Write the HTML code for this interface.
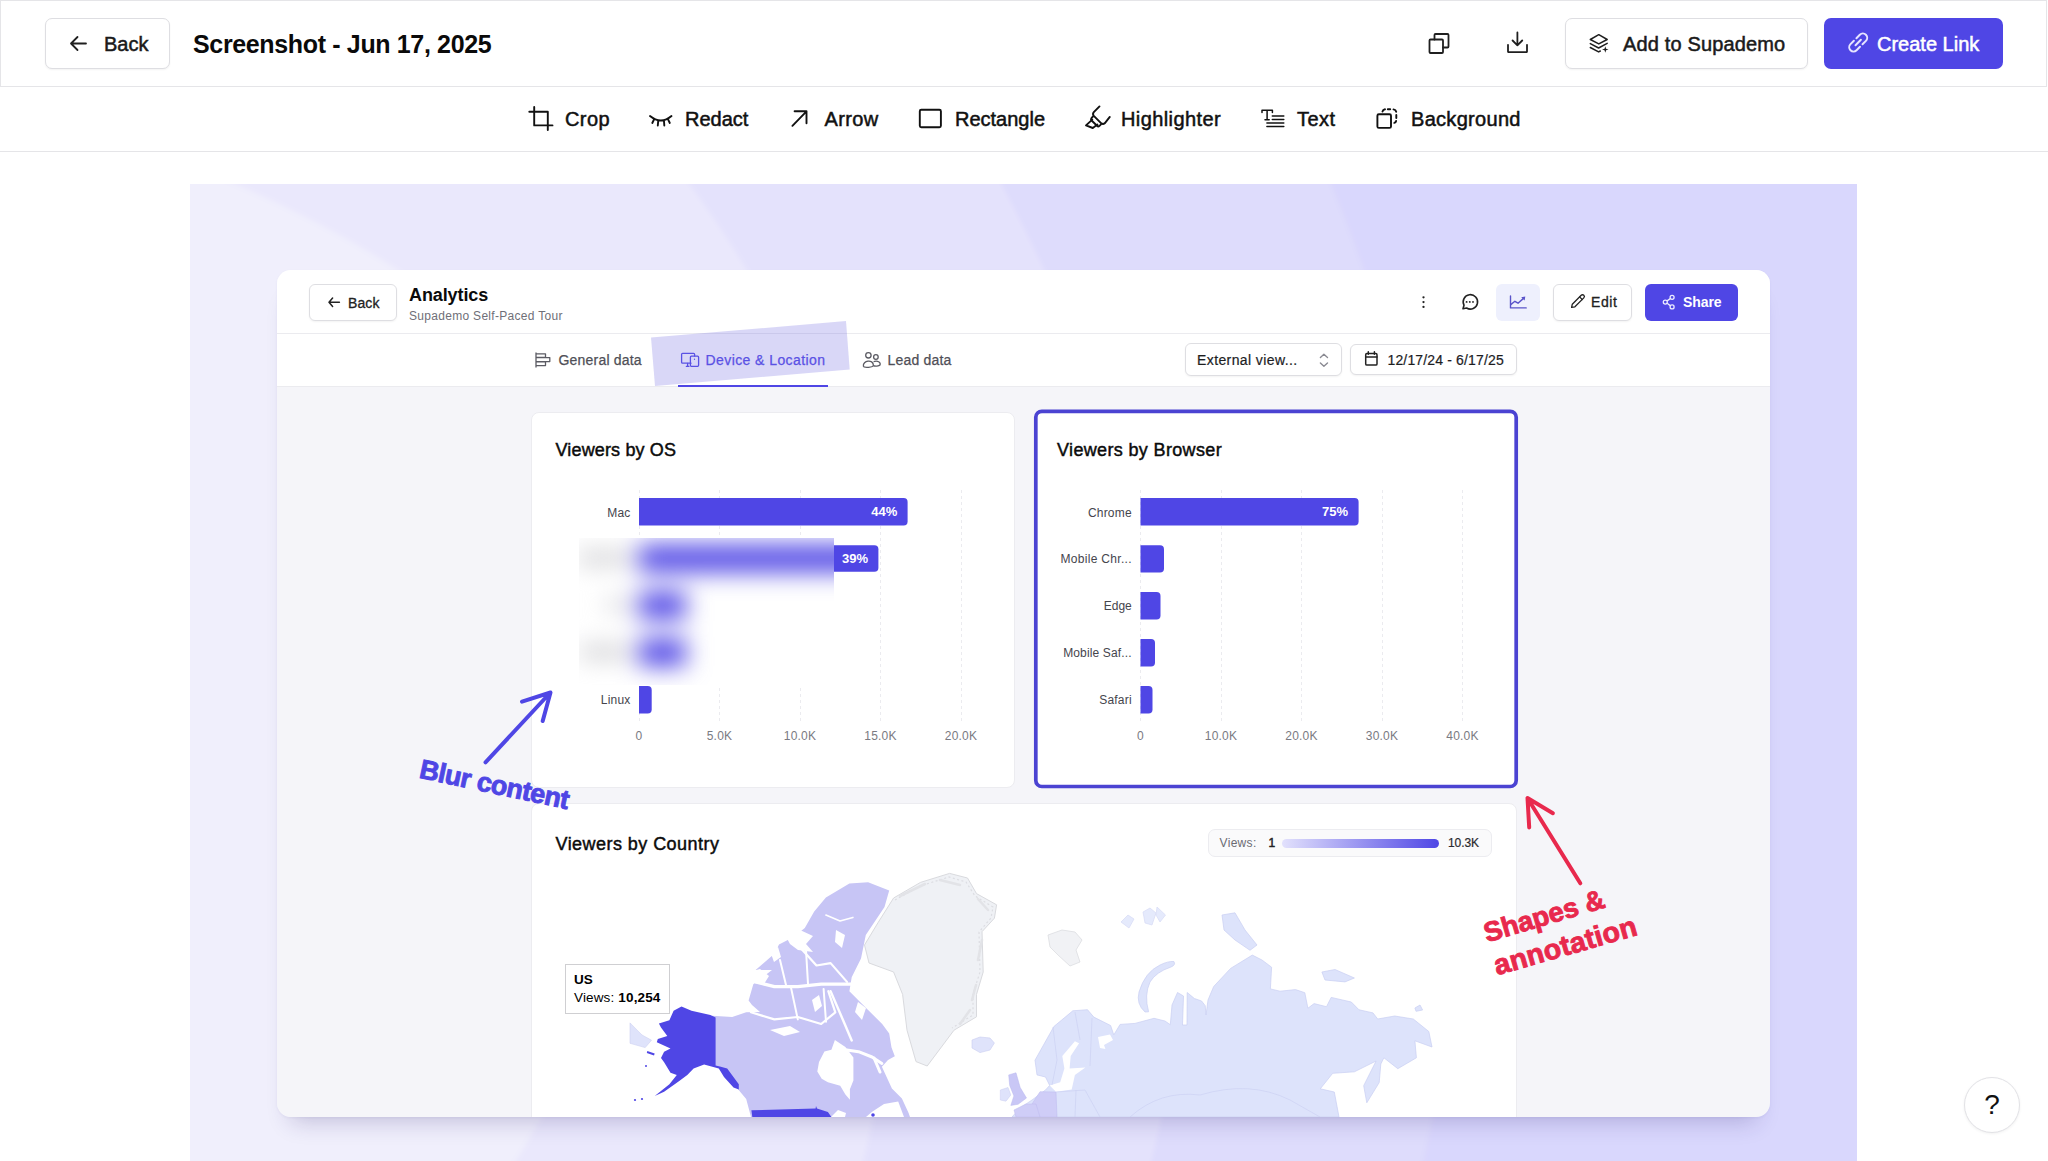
<!DOCTYPE html>
<html><head><meta charset="utf-8">
<style>
*{box-sizing:border-box;margin:0;padding:0}
html,body{width:2048px;height:1161px;overflow:hidden;background:#fff}
body{position:relative;font-family:"Liberation Sans",sans-serif;color:#111}
.a{position:absolute}
.t{position:absolute;white-space:nowrap;line-height:1}
svg{position:absolute;overflow:visible}
.btn{position:absolute;border:1px solid #dedee2;border-radius:7px;background:#fff;box-shadow:0 1px 2px rgba(0,0,0,.05)}
.med{-webkit-text-stroke:.5px currentColor}
</style></head>
<body>
<!-- header -->
<div class="a" style="left:0;top:0;width:2047px;height:87px;border:1px solid #e5e5e8"></div>
<div class="a" style="left:0;top:151px;width:2048px;height:1px;background:#e5e5e8"></div>

<div class="btn" style="left:45px;top:18px;width:125px;height:51px"></div>
<div class="btn" style="left:1565px;top:18px;width:243px;height:51px"></div>
<div class="a" style="left:1824px;top:18px;width:179px;height:51px;border-radius:7px;background:#4f46e5"></div>
<svg style="left:0;top:0" width="2048" height="160">
  <g fill="none" stroke="#1f1f1f" stroke-width="1.8" stroke-linecap="round" stroke-linejoin="round">
    <path d="M86 43.5H71M77.5 37L71 43.5L77.5 50"/>
    <!-- copy -->
    <rect x="1429.5" y="39.5" width="13.5" height="13.5" rx="1"/>
    <path d="M1434.5 39.5V35a1 1 0 0 1 1-1H1447.5a1 1 0 0 1 1 1V46.5a1 1 0 0 1-1 1H1443"/>
    <!-- download -->
    <path d="M1517.4 32.5V45.3M1512.6 40.5L1517.4 45.3L1522.2 40.5M1508 44.8V51.5a.7.7 0 0 0 .7.7H1526.3a.7.7 0 0 0 .7-.7V44.8"/>
    <!-- layers sparkle -->
    <path d="M1598.8 34.7L1607.2 39.5L1598.8 43.9L1590.3 39.5Z" stroke-width="1.5"/>
    <path d="M1590.3 43.6L1598.6 48L1607.2 43.4M1590.3 47.5L1598.6 51.9L1600.3 51" stroke-width="1.5"/>
  </g>
  <path d="M1605.3 46.2L1606.1 48.7L1608.6 49.5L1606.1 50.3L1605.3 52.8L1604.5 50.3L1602 49.5L1604.5 48.7Z" fill="#1f1f1f"/>
  <!-- toolbar icons -->
  <g fill="none" stroke="#111" stroke-width="1.9" stroke-linecap="round" stroke-linejoin="round">
    <path d="M534.2 107V125.4H552.5M529.3 111.7H547.8V130"/>
    <path d="M650 116Q661 125 671.5 116M652.3 123L654.3 118.8M657.8 125.5L658.2 121.2M664.3 125.5L664 121.2M669.8 123L667.8 118.8"/>
    <path d="M792.4 125.8L806.5 111.3M794.6 111.3H806.5V123.3"/>
    <rect x="919.8" y="109.8" width="21.1" height="17.5" rx="1.5"/>
    <path d="M1099.5 106.4L1093.8 112.2Q1092.2 114 1093.8 115.8L1101.3 123.3Q1103 124.9 1104.7 123.3L1109.8 116.9"/>
    <path d="M1093 116.5L1091.6 117.9Q1090.4 119.2 1091.6 120.5L1097 125.8Q1098.2 127 1099.5 125.8L1101 124.3"/>
    <path d="M1092.3 119.6L1086 125.4L1092.8 128L1097.4 124.6"/>
    <path d="M1262 112.6V110.3H1272.4V112.6M1267.1 110.3V119.7M1265 119.7H1269.2" stroke-width="1.5"/>
    <path d="M1272.3 116H1283.8M1272.3 119.5H1283.8M1266.9 122.9H1283.8M1266.9 126.4H1283.8" stroke-width="1.5"/>
    <rect x="1377.4" y="114.3" width="13.6" height="13.6" rx="1.5"/>
    <path d="M1382.5 111.5Q1383 109.6 1385 109.3M1387.8 109.3H1390.2M1393.5 109.4Q1395.8 109.8 1396.2 111.8M1396.3 115V118M1396.1 121Q1395.8 122.5 1394.3 122.9"/>
  </g>
</svg>
<div class="t med" style="left:104px;top:34px;font-size:20px;color:#1a1a1a">Back</div>
<div class="t" style="left:193px;top:32px;font-size:25px;font-weight:bold;letter-spacing:-0.35px;color:#0a0a0a">Screenshot - Jun 17, 2025</div>

<div class="t med" style="left:1623px;top:34px;font-size:20px;color:#1a1a1a;letter-spacing:.15px">Add to Supademo</div>
<svg style="left:0;top:0" width="2048" height="90">
  <g transform="translate(1858.2 42.5) rotate(-45)" fill="none" stroke="#e6e4ff" stroke-width="2" stroke-linecap="round">
    <path d="M-3.8 0H3.8"/>
    <path d="M-1.8 -4.3H-6.6A4.3 4.3 0 0 0 -6.6 4.3H-1.8"/>
    <path d="M1.8 -4.3H6.6A4.3 4.3 0 0 1 6.6 4.3H1.8"/>
  </g>
</svg>
<div class="t med" style="left:1877px;top:34px;font-size:20px;color:#fff">Create Link</div>

<!-- toolbar -->
<div class="t med" style="left:565px;top:108.5px;font-size:20px;letter-spacing:.4px">Crop</div>
<div class="t med" style="left:685px;top:108.5px;font-size:20px">Redact</div>
<div class="t med" style="left:824.5px;top:108.5px;font-size:20px;letter-spacing:.35px">Arrow</div>
<div class="t med" style="left:955px;top:108.5px;font-size:20px">Rectangle</div>
<div class="t med" style="left:1121px;top:108.5px;font-size:20px;letter-spacing:.4px">Highlighter</div>
<div class="t med" style="left:1297px;top:108.5px;font-size:20px;letter-spacing:.45px">Text</div>
<div class="t med" style="left:1411px;top:108.5px;font-size:20px;letter-spacing:.3px">Background</div>


<!-- canvas -->
<svg style="left:0;top:0" width="2048" height="1161">
  <defs>
    <clipPath id="cv"><rect x="190" y="184" width="1667" height="977"/></clipPath>
    <filter id="bb" x="-5%" y="-5%" width="110%" height="110%"><feGaussianBlur stdDeviation="2.5"/></filter>
  </defs>
  <g clip-path="url(#cv)">
   <g filter="url(#bb)">
    <rect x="160" y="150" width="1730" height="1040" fill="#d9d7fd"/>
    <path d="M160 150H1317Q1541 672 1419 1180H160Z" fill="#dedcfc"/>
    <path d="M160 150H983Q1278 679 1147 1180H160Z" fill="#e4e2fc"/>
    <path d="M160 150H663Q1004 579 859 1180H160Z" fill="#eae8fc"/>
    <path d="M160 150H150Q960 450 504 1180H160Z" fill="#f0effc"/>
   </g>
  </g>
</svg>
<div class="a" style="left:277px;top:270px;width:1493px;height:847px;border-radius:14px;box-shadow:0 18px 22px -14px rgba(40,30,110,.24),0 1px 3px rgba(40,30,110,.05)"></div>
<div class="a" style="left:277px;top:270px;width:1493px;height:847px;border-radius:14px;overflow:hidden;background:#f5f5f9">
<div class="a" style="left:-277px;top:-270px;width:2048px;height:1161px">
  <!-- app header -->
  <div class="a" style="left:277px;top:270px;width:1493px;height:64px;background:#fff;border-bottom:1px solid #ebebef"></div>
  <div class="a" style="left:277px;top:334px;width:1493px;height:53px;background:#fff;border-bottom:1px solid #ebebef"></div>
  <div class="btn" style="left:309px;top:284px;width:88px;height:37px;border-radius:6px"></div>
  <div class="btn" style="left:1553px;top:284px;width:79px;height:37px;border-radius:6px"></div>
  <div class="a" style="left:1645px;top:284px;width:93px;height:37px;border-radius:6px;background:#4f46e5"></div>
  <div class="a" style="left:1496px;top:284px;width:44px;height:37px;border-radius:6px;background:#eef0fd"></div>
  <div class="btn" style="left:1185px;top:343px;width:157px;height:33px;border-radius:6px"></div>
  <div class="btn" style="left:1350px;top:344px;width:167px;height:31px;border-radius:6px"></div>
  <div class="t med" style="left:348px;top:296px;font-size:14px;color:#222;letter-spacing:.1px;-webkit-text-stroke:.3px #222">Back</div>
  <div class="t" style="left:409px;top:285.5px;font-size:18px;font-weight:bold;color:#0b0b0b;letter-spacing:-.1px">Analytics</div>
  <div class="t" style="left:409px;top:309.5px;font-size:12px;color:#6f6f78;letter-spacing:.3px">Supademo Self-Paced Tour</div>
  <div class="t" style="left:1591px;top:295px;font-size:14px;color:#222;letter-spacing:.6px;-webkit-text-stroke:.3px #222">Edit</div>
  <div class="t" style="left:1683px;top:295px;font-size:14px;font-weight:bold;color:#fff;letter-spacing:-.1px">Share</div>
  <div class="t" style="left:558.5px;top:352.5px;font-size:14px;color:#4f4f57;letter-spacing:.2px;-webkit-text-stroke:.25px #4f4f57">General data</div>
  <div class="t" style="left:887.5px;top:352.5px;font-size:14px;color:#4f4f57;letter-spacing:.2px;-webkit-text-stroke:.25px #4f4f57">Lead data</div>
  <div class="t" style="left:1197px;top:353px;font-size:14px;color:#1d1d1f;letter-spacing:.4px;-webkit-text-stroke:.2px #1d1d1f">External view...</div>
  <div class="t" style="left:1387.5px;top:352.5px;font-size:14px;color:#1d1d1f;letter-spacing:.15px;-webkit-text-stroke:.2px #1d1d1f">12/17/24 - 6/17/25</div>
  <div class="a" style="left:678px;top:385px;width:150px;height:2px;background:#4f46e5"></div>

  <!-- cards -->
  <div class="a" style="left:531px;top:412px;width:484px;height:376px;background:#fff;border:1px solid #ececf0;border-radius:8px"></div>
  <div class="a" style="left:1035px;top:412px;width:482px;height:376px;background:#fff;border:1px solid #ececf0;border-radius:8px"></div>
  <div class="a" style="left:531px;top:803px;width:986px;height:400px;background:#fff;border:1px solid #ececf0;border-radius:8px"></div>

  <svg style="left:0;top:0" width="2048" height="1161">
    <g fill="none" stroke="#222" stroke-width="1.5" stroke-linecap="round" stroke-linejoin="round">
      <path d="M339.4 302.2H329M332.6 298L329 302.2L332.6 306.4"/>
      <path d="M1463 308.8L1464 305.2A7.2 7.2 0 1 1 1466.6 308Z" stroke-width="1.6"/>
      <path d="M1571.6 307.4L1572.3 304.2L1581.2 295.3A1.8 1.8 0 0 1 1583.8 297.9L1574.9 306.8Z" stroke-width="1.3"/>
      <path d="M1579.6 296.9L1582.2 299.5" stroke-width="1.2"/>
      <rect x="1365.7" y="353.6" width="11.3" height="11.5" rx="1.2" stroke-width="1.5"/>
      <path d="M1365.7 357H1377M1368.3 351.8V354.2M1374.4 351.8V354.2" stroke-width="1.5"/>
    </g>
    <g fill="#222"><circle cx="1423.5" cy="297.3" r="1.15"/><circle cx="1423.5" cy="302.1" r="1.15"/><circle cx="1423.5" cy="306.9" r="1.15"/>
      <circle cx="1466.6" cy="301.9" r=".95"/><circle cx="1469.8" cy="301.9" r=".95"/><circle cx="1473" cy="301.9" r=".95"/></g>
    <g fill="none" stroke="#5a54c9" stroke-width="1.4" stroke-linecap="round" stroke-linejoin="round">
      <path d="M1510.5 296V307.9H1526.2"/>
      <path d="M1510.7 304.6L1514.9 301.3L1518 303.2L1523.5 298.4"/>
    </g>
    <path d="M1521.2 297.2L1525.3 296.4L1524.6 300.5Z" fill="#5a54c9"/>
    <g fill="none" stroke="#ecebff" stroke-width="1.3">
      <circle cx="1672.1" cy="297.3" r="2"/><circle cx="1665.3" cy="302.1" r="2"/><circle cx="1672.1" cy="306.9" r="2"/>
      <path d="M1667.1 300.9L1670.3 298.6M1667.1 303.3L1670.3 305.6"/>
    </g>
    <g fill="none" stroke="#8a8a92" stroke-width="1.4" stroke-linecap="round" stroke-linejoin="round">
      <path d="M1320.4 357.5L1323.9 354.3L1327.5 357.5M1320.4 363L1323.9 366.2L1327.5 363"/>
    </g>
    <g fill="none" stroke="#5b5b63" stroke-width="1.3" stroke-linejoin="round">
      <path d="M536 352.5V367.4"/>
      <path d="M536 353.8H545.5V357.4H536M536 357.6H549.8V361.6H536M536 361.8H545.5V365.6H536"/>
      <circle cx="868.4" cy="355.3" r="2.7"/><circle cx="875.9" cy="357" r="2.3"/>
      <path d="M863.4 366.2C862.5 360.5 873.2 358.8 873.4 365.2C873.2 367.6 863.8 368 863.4 366.2Z"/>
      <path d="M873.6 361.6C877.5 360.3 881 362.2 880 365C879 366.2 875 366.4 873.4 365.6"/>
    </g>
  </svg>
  <!-- device tab -->
  <div class="t" style="left:705.5px;top:352.5px;font-size:14px;color:#4f46e5;letter-spacing:.42px;-webkit-text-stroke:.25px #4f46e5">Device &amp; Location</div>
  <svg style="left:0;top:0" width="2048" height="1161">
    <g fill="none" stroke="#4f46e5" stroke-width="1.3" stroke-linejoin="round" stroke-linecap="round">
      <path d="M691 363.2H682.6A1 1 0 0 1 681.6 362.2V354.3A1 1 0 0 1 682.6 353.3H693.6A1 1 0 0 1 694.6 354.3V356"/>
      <path d="M686.3 366.3H689M687.6 363.4V366.3"/>
      <rect x="690.4" y="356.2" width="8.2" height="10.1" rx="1"/>
      <path d="M694.5 359.2V359.3"/>
    </g>
    <polygon points="651,337.6 846,321 849.7,369.5 655,386" fill="rgba(120,110,225,.28)"/>
  </svg>
  <div class="t" style="left:555.5px;top:441px;font-size:18px;color:#0b0b0b;letter-spacing:.15px;-webkit-text-stroke:.45px #0b0b0b">Viewers by OS</div>
  <div class="t" style="left:1057px;top:441px;font-size:18px;color:#0b0b0b;letter-spacing:.35px;-webkit-text-stroke:.45px #0b0b0b">Viewers by Browser</div>
  <div class="t" style="left:555.5px;top:835px;font-size:18px;color:#0b0b0b;letter-spacing:.45px;-webkit-text-stroke:.45px #0b0b0b">Viewers by Country</div>
  <!-- charts -->
  <svg style="left:0;top:0" width="2048" height="1161">
    <g stroke="#ebebef" stroke-width="1" stroke-dasharray="3 3">
      <path d="M639.5 490V723"/>
      <path d="M719.5 490V723"/>
      <path d="M800.5 490V723"/>
      <path d="M880.5 490V723"/>
      <path d="M961.5 490V723"/>
      <path d="M1140.5 490V723"/>
      <path d="M1221.5 490V723"/>
      <path d="M1301.5 490V723"/>
      <path d="M1382.5 490V723"/>
      <path d="M1462.5 490V723"/>
    </g>
    <g fill="#4f46e5">
      <path d="M639 498H903.6Q907.6 498 907.6 502V521.4Q907.6 525.4 903.6 525.4H639Z"/>
      <path d="M834 545.2H874.4Q878.4 545.2 878.4 549.2V567.8000000000001Q878.4 571.8000000000001 874.4 571.8000000000001H834Z"/>
      <path d="M639 686H647.7Q651.7 686 651.7 690V709.4Q651.7 713.4 647.7 713.4H639Z"/>
      <path d="M1140.5 498H1354.6Q1358.6 498 1358.6 502V521.4Q1358.6 525.4 1354.6 525.4H1140.5Z"/>
      <path d="M1140.5 545.2H1160Q1164 545.2 1164 549.2V568.6Q1164 572.6 1160 572.6H1140.5Z"/>
      <path d="M1140.5 592H1156.5Q1160.5 592 1160.5 596V615.4Q1160.5 619.4 1156.5 619.4H1140.5Z"/>
      <path d="M1140.5 639H1151Q1155 639 1155 643V662.4Q1155 666.4 1151 666.4H1140.5Z"/>
      <path d="M1140.5 686H1148.5Q1152.5 686 1152.5 690V709.4Q1152.5 713.4 1148.5 713.4H1140.5Z"/>
    </g>
  </svg>
  <div class="t" style="left:480.5px;width:150px;text-align:right;top:506.5px;font-size:12px;color:#45454d;letter-spacing:0.2px">Mac</div>
  <div class="t" style="left:480.5px;width:150px;text-align:right;top:694.3px;font-size:12px;color:#45454d;letter-spacing:0.2px">Linux</div>
  <div class="t" style="left:981.8px;width:150px;text-align:right;top:506.5px;font-size:12px;color:#45454d;letter-spacing:0.2px">Chrome</div>
  <div class="t" style="left:981.8px;width:150px;text-align:right;top:553.3px;font-size:12px;color:#45454d;letter-spacing:0.3px">Mobile Chr...</div>
  <div class="t" style="left:981.8px;width:150px;text-align:right;top:600.3px;font-size:12px;color:#45454d;letter-spacing:0px">Edge</div>
  <div class="t" style="left:981.8px;width:150px;text-align:right;top:647.3px;font-size:12px;color:#45454d;letter-spacing:0.15px">Mobile Saf...</div>
  <div class="t" style="left:981.8px;width:150px;text-align:right;top:694.3px;font-size:12px;color:#45454d;letter-spacing:0.2px">Safari</div>
  <div class="t" style="left:599px;width:80px;text-align:center;top:729.8px;font-size:12px;color:#7a7a82;letter-spacing:.2px">0</div>
  <div class="t" style="left:679.5px;width:80px;text-align:center;top:729.8px;font-size:12px;color:#7a7a82;letter-spacing:.2px">5.0K</div>
  <div class="t" style="left:760px;width:80px;text-align:center;top:729.8px;font-size:12px;color:#7a7a82;letter-spacing:.2px">10.0K</div>
  <div class="t" style="left:840.5px;width:80px;text-align:center;top:729.8px;font-size:12px;color:#7a7a82;letter-spacing:.2px">15.0K</div>
  <div class="t" style="left:921px;width:80px;text-align:center;top:729.8px;font-size:12px;color:#7a7a82;letter-spacing:.2px">20.0K</div>
  <div class="t" style="left:1100.5px;width:80px;text-align:center;top:729.8px;font-size:12px;color:#7a7a82;letter-spacing:.2px">0</div>
  <div class="t" style="left:1181px;width:80px;text-align:center;top:729.8px;font-size:12px;color:#7a7a82;letter-spacing:.2px">10.0K</div>
  <div class="t" style="left:1261.5px;width:80px;text-align:center;top:729.8px;font-size:12px;color:#7a7a82;letter-spacing:.2px">20.0K</div>
  <div class="t" style="left:1342px;width:80px;text-align:center;top:729.8px;font-size:12px;color:#7a7a82;letter-spacing:.2px">30.0K</div>
  <div class="t" style="left:1422.5px;width:80px;text-align:center;top:729.8px;font-size:12px;color:#7a7a82;letter-spacing:.2px">40.0K</div>
  <div class="t" style="left:747.3px;width:150px;text-align:right;top:505px;font-size:13px;font-weight:bold;color:#fff;letter-spacing:0px">44%</div>
  <div class="t" style="left:718px;width:150px;text-align:right;top:552px;font-size:13px;font-weight:bold;color:#fff;letter-spacing:0px">39%</div>
  <div class="t" style="left:1198px;width:150px;text-align:right;top:505px;font-size:13px;font-weight:bold;color:#fff;letter-spacing:0px">75%</div>
  <div class="a" style="left:579px;top:537.5px;width:255px;height:147px;overflow:hidden;background:#fff">
    <div class="a" style="left:-579px;top:-537.5px;width:1000px;height:800px;filter:blur(12px)">
      <div class="a" style="left:639px;top:545px;width:239px;height:27px;background:#4f46e5"></div>
      <div class="a" style="left:639px;top:592px;width:47px;height:27px;background:#4f46e5"></div>
      <div class="a" style="left:639px;top:639px;width:47px;height:27px;background:#4f46e5"></div>
      <div class="a" style="left:578px;top:552px;width:52px;height:12px;background:#c8c8cc"></div>
      <div class="a" style="left:606px;top:599px;width:24px;height:12px;background:#d4d4d8"></div>
      <div class="a" style="left:580px;top:646px;width:50px;height:12px;background:#c8c8cc"></div>
    </div>
  </div>
  <!-- map -->
  <svg style="left:0;top:0" width="2048" height="1161">
    <g fill="#c7c5f5">
      <path d="M748.6 1000.6L753.3 984.2L772 970.1L755.6 970.1L774.4 953.7L779 944.4L793.1 937.3L804.8 928L814.2 911.6L825.9 897.5L849.4 883.4L868.1 882.3L889.2 890.5L884.5 906.9L865.8 935L861 958.4L851.7 977.2L849.4 991.2L868.1 1010L882.2 1024L889.2 1033.4L891.5 1047.5L898.6 1066.2L896.2 1082.6L905.6 1094.4L910.3 1117L751 1117L746.2 1099L734.5 1085L718.1 1067.4L712 1065L712 1015.8L732.2 1017L746.2 1012.3L760 1012L752 1005Z"/>
    </g>
    <g fill="#fff">
      <path d="M817.3 1071.6L819 1062L824.4 1051.4L831.4 1049.7L834.9 1040L845.4 1047L853.4 1057.6L853.4 1080.4L849.9 1089.2L849.9 1099.8L845.4 1094.5L840.2 1085.7L827.9 1082.2L821.7 1078.7Z"/>
      <path d="M881.9 1066.8L891.9 1088.5L901.9 1098.5L908.6 1113L910 1117L915 1117L915 1045L888 1060Z"/>
      <path d="M871.8 1112L884 1104L898.2 1101.5L904 1117L866 1117Z"/>
      <path d="M831 1117L838 1110L846 1113L845 1117Z"/>
      <path d="M784 933L800 930L813 936L806 944L813 952L798 950L790 944Z"/>
      <path d="M749 972L760 969L769 976L764 984L752 983Z"/>
      <path d="M770 951L778 947L781 957L774 962Z"/>
      <path d="M812 1000L819 995L822 1006L815 1012Z"/>
      <path d="M836 930L845 935L842 948L835 942Z"/>
      <path d="M858 1002L866 1008L862 1020L855 1012Z"/>
      <path d="M770 1030L790 1026L800 1032L784 1036Z"/>
    </g>
    <g fill="none" stroke="#fff" stroke-linecap="round" stroke-linejoin="round">
      <path d="M751 1012.3L774.4 1019.4L797.8 1017L821.2 1024L835.3 1012.3L828.3 991.2" stroke-width="2.2"/>
      <path d="M755.6 981.9L774.4 986.6L797.8 986.6L821.2 984.2L851.7 984.2L862 992" stroke-width="3.2"/>
      <path d="M790.8 937.3L816.5 965.5L830.6 963.1L847 981.9" stroke-width="2.2"/>
      <path d="M825.9 915L840 921L852.9 917.4" stroke-width="1.6"/>
      <path d="M790.8 986.6L797.8 1019.4M823.6 988.9L826 1021.7M780 960L786 985M806 950L808 984" stroke-width="2"/>
      <path d="M830.6 991.2L844.7 1024L851.7 1040.5" stroke-width="2.4"/>
      <path d="M846.8 1050L858.5 1051.7L872 1057L881.9 1063.4" stroke-width="3"/>
      <path d="M874 1058L880 1072" stroke-width="3"/>
    </g>
    <!-- US -->
    <g fill="#4f46e5">
      <path d="M681.5 1006.6L691.5 1010.8L710.4 1015L715.6 1017.6L715.6 1065.4L719.9 1066.5L727.2 1068.6L738.8 1084.3L738.8 1089.6L733.5 1087.5L724 1077L718.8 1068.6L704.1 1064.4L693.6 1068.6L687.3 1074.9L678.9 1081.2L664.1 1091.7L654.7 1095.9L669.4 1084.3L676.8 1074.9L670.5 1072.8L664.1 1062.3L661 1058.1L664.1 1051.8L670.5 1048.6L656.8 1042.3L657.8 1039.1L667.3 1036L661 1027.6L658.9 1023.4L669.4 1020.2L673.6 1010.8Z"/>
      <path d="M751.4 1110.3L815.6 1108.5L816 1106L817 1108.6L827.9 1112L831.4 1117L752.3 1117Z"/>
      <circle cx="873" cy="1115" r="1.8"/>
      <path d="M647.3 1051L654.7 1053.5L654 1055.5L646.8 1053Z"/><circle cx="646" cy="1066" r="1"/><circle cx="635" cy="1100" r="1.1"/><circle cx="642" cy="1099" r="1.1"/>
    </g>
    <!-- Chukotka -->
    <path d="M630 1022.9L642 1035L651.5 1040.2L645.2 1047.6L630 1043.3Z" fill="#dfe3fb" stroke="#cdd0f2" stroke-width=".6"/>
    <!-- Greenland -->
    <path d="M920.5 882.4L949.6 873.4L967.5 878L976.5 893.6L996.6 904.8L994.4 918.2L982 931.7L983.2 972L976.5 994.4L976.5 1016.8L954 1030.2L927.2 1066L916 1061.6L907 1030.2L902.6 994.4L893.6 972L869 963L864.5 945L878 922.7L893.6 898Z" fill="#eff1f5" stroke="#d9dade" stroke-width="1"/>
    <path d="M1048 935L1062 930L1075 932L1082 940L1076 950L1080 962L1070 966L1058 955L1050 947Z" fill="#f1f2f5" stroke="#dcdde1" stroke-width=".8"/>
    <path d="M895 900L920 886L949 877L966 882L975 896L993 907L991 918L979 932L980 972L973 994L973 1015L952 1028" fill="none" stroke="#dcdde2" stroke-width="1.2" stroke-dasharray="2 2.5"/>
    <path d="M900 896L925 884M940 880L960 885M978 899L988 910M982 940L978 960M976 985L972 1000M970 1010L960 1024" fill="none" stroke="#e2e3e7" stroke-width="2.5" stroke-linecap="round"/>
    <!-- Iceland -->
    <path d="M972 1040L980 1037L990 1038L994.4 1043L990 1050L980 1052.6L972 1048Z" fill="#dfe3fb" stroke="#c9cdf0" stroke-width=".6"/>
    <!-- Eurasia -->
    <g fill="#dde3fb" stroke="#c9cef2" stroke-width=".7">
      <path d="M1035 1060.2L1053.9 1026.5L1072.8 1010.8L1087.5 1009.7L1093.8 1017.1L1110.6 1025.5L1113.8 1034.9L1120.1 1024.4L1135 1023.4L1154 1018.3L1165 1021L1170.3 1024.7L1172 1005L1177.5 992.5L1183.5 996L1182.5 1025L1187 1025L1187.2 992.5L1194.4 998.5L1201.6 1001L1205.2 1005.7L1206 1015L1208 1000L1213.7 986.5L1230.6 968.4L1252.3 955.1L1262 960L1271.6 967.2L1270.4 988.9L1280 991.2L1295.5 989.6L1304.8 992.7L1307.9 1008.2L1314.1 1003.6L1326.5 1006.7L1331.2 997.4L1351.3 1002L1359 1009.8L1373 1012.9L1377.7 1019L1394.7 1016L1413.3 1019L1428.8 1031.5L1432 1047L1414.9 1040.8L1416.4 1057.8L1397.8 1068.7L1383.9 1057.8L1380.8 1064L1379.2 1082.6L1366.8 1102.8L1363.7 1085.7L1369.9 1073.3L1376.1 1061L1354.4 1071.8L1332.7 1073.3L1320.3 1088.8L1334.3 1092L1339 1117L1012 1117L1020 1108L1032 1100L1045.5 1090L1049.7 1085.4L1045.5 1077L1037 1074.9Z"/>
      <path d="M1173.9 961.5Q1176 965 1171 967Q1156 972 1150 982Q1144 995 1148.6 1011.8L1145 1012Q1136 1004 1139 992Q1145 972 1160 965Q1168 961 1173.9 961.5Z"/>
      <g opacity=".75"><path d="M1121 922L1128 915L1134 919L1129 928Z"/><path d="M1143 912L1150 908L1156 913L1152 925L1145 923Z"/><path d="M1157 907L1165.5 915L1160 922L1156 915Z"/></g>
      <path d="M1222 915L1235 912.8L1245 930L1257 945L1250 950.3L1235 940L1224 930Z"/>
      <path d="M1321.9 972L1335 969.5L1354.4 978L1345 981.9L1325 980Z"/>
      <path d="M1414.9 1008L1420 1005L1422.6 1010L1416 1011.3Z"/>
    </g>
    <g fill="#c9c7f6" stroke="#b9b7ee" stroke-width=".5">
      <path d="M1008.7 1074.9L1016 1072.8L1020.2 1087.5L1026.5 1098L1018.1 1104.3L1010.8 1105.4L1013.9 1095.9L1009.7 1085.4Z"/>
    </g>
    <path d="M1000.3 1090L1008 1087.5L1010.8 1095L1006 1101.2L1000.3 1100Z" fill="#dfe3fb" stroke="#c9cdf0" stroke-width=".5"/>
    <g fill="#cfcdf7" stroke="#bdbbef" stroke-width=".5">
      <path d="M1040 1091.7L1056 1092L1057 1117L1036 1117L1032 1104Z"/>
      <path d="M1014 1110L1026 1104L1036 1104L1040 1117L1016 1117Z"/>
    </g>
    <g fill="#fff">
      <path d="M1062.3 1056L1074.9 1041.2L1079.1 1043.3L1070.7 1056L1069.6 1068.6L1085.4 1067.5L1074.9 1074.9L1071.7 1089.6L1056 1091.7L1049.7 1085.4L1060.2 1082.2L1064.4 1068.6Z"/>
      <path d="M1098 1037L1110 1034.5L1113 1040L1104 1045L1105.4 1049L1100 1048Z"/>
    </g>
    <g fill="none" stroke="#c9cef2" stroke-width=".6">
      <path d="M1053 1027L1057 1060L1052 1085M1075 1012L1080 1040M1092 1018L1090 1066M1056 1092L1085 1090L1100 1117M1076 1090L1075 1117M1130 1117Q1160 1090 1200 1095Q1250 1080 1290 1100L1320 1117"/>
    </g>
  </svg>
  <div class="a" style="left:565px;top:964px;width:105px;height:50px;background:#fff;border:1px solid #cfcfd2"></div>
  <div class="t" style="left:574px;top:973px;font-size:13.5px;font-weight:bold;color:#000">US</div>
  <div class="t" style="left:574px;top:990.5px;font-size:13.5px;color:#000;letter-spacing:.15px">Views: <b>10,254</b></div>
  <!-- legend -->
  <div class="a" style="left:1208px;top:829px;width:284px;height:28px;background:#fafafb;border:1px solid #ececf0;border-radius:7px"></div>
  <div class="a" style="left:1282px;top:839px;width:157px;height:8.5px;border-radius:5px;background:linear-gradient(90deg,#e2e1fc,#4f46e5)"></div>
  <div class="t" style="left:1219.6px;top:837px;font-size:12px;color:#6b6b73;letter-spacing:.3px">Views:</div>
  <div class="t" style="left:1268.5px;top:837px;font-size:12px;color:#222;-webkit-text-stroke:.45px #222">1</div>
  <div class="t" style="left:1448px;top:837px;font-size:12px;color:#2a2a2e;letter-spacing:-.1px;-webkit-text-stroke:.2px #2a2a2e">10.3K</div>
</div>
</div>

<!-- annotations -->
<svg style="left:0;top:0" width="2048" height="1161">
  <rect x="1035.8" y="411.3" width="480.4" height="375.2" rx="6" fill="none" stroke="#4b43d2" stroke-width="3.7"/>
  <g fill="none" stroke="#4f46e5" stroke-width="4" stroke-linecap="round" stroke-linejoin="round">
    <path d="M485.5 762.3L550 693M522 701.7L550.5 692.5L542.7 721"/>
  </g>
  <g fill="none" stroke="#e8294d" stroke-width="4" stroke-linecap="round" stroke-linejoin="round">
    <path d="M1580.3 883.3L1528 799M1552.9 813.2L1527.5 798L1529.2 827.4"/>
  </g>
</svg>
<div class="t" style="left:417.7px;top:755.9px;font-size:27px;font-weight:bold;color:#4f46e5;letter-spacing:-.6px;-webkit-text-stroke:.9px #4f46e5;transform-origin:2px 22.86px;transform:rotate(12deg)">Blur content</div>
<div class="t" style="left:1486.5px;top:919px;font-size:27.5px;font-weight:bold;color:#e8294d;letter-spacing:-.1px;-webkit-text-stroke:.9px #e8294d;transform-origin:1.5px 23.28px;transform:rotate(-16.5deg)">Shapes &amp;</div>
<div class="t" style="left:1497px;top:951px;font-size:28.5px;font-weight:bold;color:#e8294d;letter-spacing:.2px;-webkit-text-stroke:.9px #e8294d;transform-origin:1.1px 24.1px;transform:rotate(-16deg)">annotation</div>
<!-- help -->
<div class="a" style="left:1964px;top:1077px;width:56px;height:56px;border-radius:50%;background:#fff;border:1px solid #e2e2e6;box-shadow:0 1px 3px rgba(0,0,0,.06)"></div>
<div class="t" style="left:1964px;width:56px;text-align:center;top:1091px;font-size:28px;color:#111">?</div>
</body></html>
